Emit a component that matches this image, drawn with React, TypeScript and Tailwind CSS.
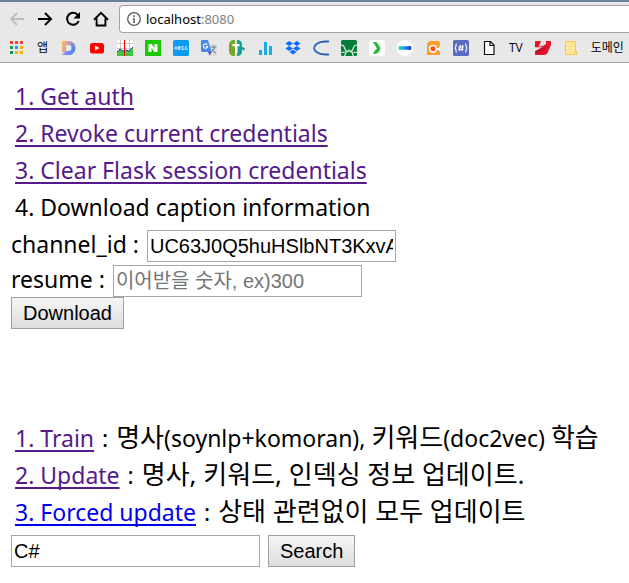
import type { ReactNode } from "react";

const pageFont = "font-['Noto_Sans','Noto_Sans_CJK_KR',sans-serif]";
const controlFont = "font-['Liberation_Sans','Noto_Sans_CJK_KR',sans-serif]";

function Icon({ children }: { children: ReactNode }) {
  return (
    <svg viewBox="0 0 16 16" className="size-4 shrink-0" aria-hidden="true">
      {children}
    </svg>
  );
}

function NavButton({ label, children }: { label: string; children: ReactNode }) {
  return (
    <button type="button" aria-label={label} className="size-4 shrink-0">
      <Icon>{children}</Icon>
    </button>
  );
}

function Bookmark({ label, children }: { label: string; children: ReactNode }) {
  return (
    <a href="#" aria-label={label} className="shrink-0">
      {children}
    </a>
  );
}

function Toolbar() {
  return (
    <div className="flex h-7 items-center gap-3 pl-[9px]">
      <NavButton label="Back">
        <path d="M15 8H2.500M8 2L2 8l6 6" fill="none" stroke="#bdbdbd" strokeWidth="1.800" />
      </NavButton>
      <NavButton label="Forward">
        <path d="M1 8h12.500M8 2l6 6-6 6" fill="none" stroke="#000" strokeWidth="2" />
      </NavButton>
      <NavButton label="Reload">
        <path d="M12.900 4.200A6 6 0 1 0 13.700 10" fill="none" stroke="#000" strokeWidth="2" />
        <path d="M15 1v6.500H8.500z" />
      </NavButton>
      <NavButton label="Home">
        <path d="M1 8.700L8 1.800l7 6.900M3.600 7.500v7h8.800v-7" fill="none" stroke="#000" strokeWidth="1.900" />
      </NavButton>
      <div className="-ml-0.5 flex h-7 grow items-center rounded-l-sm border border-r-0 border-[#a3a3a3] bg-white pl-1.5">
        <svg viewBox="0 0 16 16" className="size-4 shrink-0" aria-hidden="true">
          <circle cx="8" cy="8" r="6.300" fill="none" stroke="#5a5a5a" strokeWidth="1.300" />
          <path d="M7.200 4.300h1.600v1.600H7.200zM7.200 7h1.600v5H7.200z" fill="#5a5a5a" />
        </svg>
        <div className="pl-1 font-['Noto_Sans',sans-serif] text-[13px] leading-5">
          localhost<span className="text-[#808080]">:8080</span>
        </div>
      </div>
    </div>
  );
}

const appDots = ["#f44336", "#f44336", "#f44336", "#0f9d58", "#2196f3", "#ffb300", "#0f9d58", "#ffb300", "#ffb300"];

function Bookmarks() {
  return (
    <nav className="flex h-[29px] items-center gap-3 overflow-hidden pl-[9px] font-['Open_Sans','Noto_Sans_CJK_KR',sans-serif] text-xs leading-4 whitespace-nowrap">
      <Bookmark label="Apps">
        <Icon>
          {appDots.map((color, i) => (
            <rect key={i} x={1 + (i % 3) * 5} y={1 + Math.floor(i / 3) * 5} width="3" height="3" fill={color} />
          ))}
        </Icon>
      </Bookmark>
      <a href="#" className="w-3 shrink-0">앱</a>
      <Bookmark label="Daum">
        <Icon>
          <defs>
            <linearGradient id="dfill" x1="0" y1="0" x2="1" y2="0.3">
              <stop offset="0" stopColor="#ffc44d" />
              <stop offset="0.5" stopColor="#c99aa8" />
              <stop offset="1" stopColor="#4285f4" />
            </linearGradient>
            <linearGradient id="dbase" x1="0" y1="0" x2="1" y2="0">
              <stop offset="0" stopColor="#b388ee" />
              <stop offset="1" stopColor="#448aff" />
            </linearGradient>
          </defs>
          <path d="M1 1h6.500a7 7 0 0 1 0 14H1l4-4h2.500a3 3 0 0 0 0-6H5v6l-4 2z" fill="url(#dfill)" />
          <path d="M1 15l4-4h3l4 2.500Q10 15 7.500 15z" fill="url(#dbase)" />
        </Icon>
      </Bookmark>
      <Bookmark label="YouTube">
        <Icon>
          <rect x="1" y="3" width="14" height="10.500" rx="2.500" fill="#f00" />
          <path d="M6 5.500v5L10.500 8z" fill="#fff" />
        </Icon>
      </Bookmark>
      <Bookmark label="Chart">
        <Icon>
          <path d="M0 0h16v16H0z" fill="#fff" />
          <path d="M0 3.500h16M0 8.500h16M3.500 0v16M12.500 0v16" stroke="#c8c8c8" />
          <path d="M0 12l3-3 3 2 3-1 3 1 4-4v9H0z" fill="#3fc53f" />
          <path d="M0 12l3-3 3 2 3-1 3 1 4-4" fill="none" stroke="#2541b8" />
          <path d="M7 0h1v16H7z" fill="red" />
        </Icon>
      </Bookmark>
      <Bookmark label="Naver">
        <Icon>
          <path d="M0 0h16v16H0z" fill="#1ec800" />
          <path d="M3.500 4h3L9.500 8V4h3v8h-3l-3-4v4h-3z" fill="#fff" />
        </Icon>
      </Bookmark>
      <Bookmark label="ORGG">
        <Icon>
          <rect width="16" height="16" rx="1.500" fill="#0d9bef" />
          <g fill="none" stroke="#d8f0ff" strokeWidth="0.900">
            <circle cx="3" cy="8" r="1.300" />
            <path d="M5.500 10V6.500h1.700v1.500H6l1.500 2M11 6.700H9v2.800h2V8.500M14.500 6.700h-2v2.800h2V8.500" />
          </g>
        </Icon>
      </Bookmark>
      <Bookmark label="Translate">
        <Icon>
          <path d="M7 4h9v12H9z" fill="#dcdcdc" />
          <path d="M9.500 7h6M12.500 5.500V7M14 7q-1 4-4 5M11 9q1 3 4 4" stroke="#6f7f8c" fill="none" />
          <path d="M1 0h6l3.500 12H1a1 1 0 0 1-1-1V1a1 1 0 0 1 1-1" fill="#4a86e8" />
          <path d="M7 12h3.500L8.500 15.500z" fill="#3f51b5" />
          <path d="M6.300 4.700a2.200 2.200 0 1 0 .4 1.800H4.700" stroke="#fff" strokeWidth="1.100" fill="none" />
        </Icon>
      </Bookmark>
      <Bookmark label="Encyclopedia">
        <Icon>
          <path d="M3.500 0H6v16H3.500Q0 15 0 11V5Q0 1 3.500 0" fill="#7da52e" />
          <path d="M6 0h2v16H6z" fill="#dfe9d2" />
          <path d="M8 0q5 0 5 5v6q0 5-5 5z" fill="#12a193" />
          <path d="M13 7l3 1-1 3-2-2z" fill="#12a193" />
          <path d="M3.500 4h7v2.200H8.500V13H6V6.200H3.500z" fill="#fff" />
        </Icon>
      </Bookmark>
      <Bookmark label="Statistics">
        <Icon>
          <path d="M2 10h3v5H2zM7 2h3v13H7zM12 6h3v9h-3z" fill="#16addf" />
        </Icon>
      </Bookmark>
      <Bookmark label="Dropbox">
        <Icon>
          <path d="M4.200 1L8 3.500 4.200 6 .4 3.500zM11.800 1l3.800 2.500L11.800 6 8 3.500zM4.200 6L8 8.500 4.200 11 .4 8.500zM11.800 6l3.800 2.500-3.800 2.500L8 8.500zM8 9.700l3.600 2.300L8 14.500 4.400 12z" fill="#0a6cff" />
        </Icon>
      </Bookmark>
      <Bookmark label="C">
        <Icon>
          <path d="M16 1.500H12C-2.500 2-2.500 14 12 14.500H16" fill="none" stroke="#2b5fb4" strokeWidth="1.800" />
        </Icon>
      </Bookmark>
      <Bookmark label="Wiki">
        <Icon>
          <rect width="16" height="16" rx="1.500" fill="#087c3b" />
          <path d="M0 5q3 0 4 4l2 3 2-2 2 2 2-3q1-4 4-4M0 12.500l5-.5M16 12.500l-5-.5M5 12.500L3.500 16M11 12.500l1.500 3.500" fill="none" stroke="#e2f3e8" strokeWidth="1.200" />
        </Icon>
      </Bookmark>
      <Bookmark label="Arrow">
        <Icon>
          <rect width="16" height="16" rx="3" fill="#fff" />
          <path d="M4 2h3.500l4 6q-1 6-7 6 0-3 3.500-5.500z" fill="#26b83b" />
        </Icon>
      </Bookmark>
      <Bookmark label="Dots">
        <Icon>
          <circle cx="8" cy="8" r="8" fill="#fff" />
          <circle cx="3.300" cy="8" r="2" fill="#18d5a4" />
          <circle cx="6.500" cy="8" r="2" fill="#15a9e8" />
          <circle cx="9.500" cy="8" r="2" fill="#247ce8" />
          <circle cx="12.500" cy="8" r="2.200" fill="#2459d8" />
        </Icon>
      </Bookmark>
      <Bookmark label="Search">
        <Icon>
          <path d="M2 3l3-2h9l1 2v3l-1 1 1 2v6H2z" fill="#ff9d2e" />
          <circle cx="8" cy="8.800" r="3.300" fill="#f4511e" stroke="#fff" strokeWidth="1.600" />
          <path d="M11 9l4-2v4z" fill="#fff" />
        </Icon>
      </Bookmark>
      <Bookmark label="Hash">
        <Icon>
          <rect width="16" height="16" rx="1.500" fill="#5c6bc0" />
          <path d="M4 4Q2.500 4 3 6.500L2 8l1 1.500Q2.500 12 4 12M12 4q1.500 0 1 2.500L14 8l-1 1.500q.5 2.500-1 2.500M7.300 5L6.500 11M9.800 5L9 11M5.500 7h5.300M5.200 9.300h5.300" fill="none" stroke="#fff" strokeWidth="1.100" />
        </Icon>
      </Bookmark>
      <a href="#" className="flex shrink-0 items-center gap-3">
        <Icon>
          <path d="M3.500 1.500h6l3.500 3.500v9.500H3.500zM9 2v3.500h4" fill="#fff" stroke="#111" strokeWidth="1.200" />
        </Icon>
        TV
      </a>
      <Bookmark label="News">
        <Icon>
          <path d="M0 1h6L4 6h4l3-2 0-3h5v4l-4 9-3 1H0v-4l8-4-8 1z" fill="#e2182d" />
          <path d="M1 11l10-5-3 5-7 3z" fill="#c60f29" />
          <path d="M0 7.500h3L8 4.500l2-3" fill="none" stroke="#f6c5cb" strokeWidth="0.800" />
        </Icon>
      </Bookmark>
      <a href="#" className="flex shrink-0 items-center gap-3">
        <Icon>
          <path d="M2.500 1.500h10v10h1v3h-11z" fill="#ffe596" stroke="#f0cb55" />
          <path d="M11.500 14.500v-2.500h1.500" fill="none" stroke="#f0cb55" />
        </Icon>
        도메인
      </a>
    </nav>
  );
}

function Hangul({ children }: { children: ReactNode }) {
  return <span className="text-[26px] leading-none">{children}</span>;
}

const authLinks = ["1. Get auth", "2. Revoke current credentials", "3. Clear Flask session credentials"];

const updateLinks = [
  {
    text: "1. Train",
    note: (
      <>
        <Hangul>명사</Hangul>(soynlp+komoran), <Hangul>키워드</Hangul>(doc2vec) <Hangul>학습</Hangul>
      </>
    ),
    color: "text-[#551a8b]",
  },
  { text: "2. Update", note: <Hangul>명사, 키워드, 인덱싱 정보 업데이트.</Hangul>, color: "text-[#551a8b]" },
  { text: "3. Forced update", note: <Hangul>상태 관련없이 모두 업데이트</Hangul>, color: "text-[#0000ee]" },
];

const underline = "underline decoration-2 underline-offset-3 [text-decoration-skip-ink:none]";
const field = `${controlFont} h-8 w-[249px] border border-[#a6a6a6] bg-white px-0.5 text-xl leading-7 placeholder:text-[#757575]`;
const button = `${controlFont} h-8 border border-[#a0a0a0] bg-linear-to-b from-[#f6f6f6] to-[#dddddd] px-[11px] text-xl leading-7`;

export default function App() {
  return (
    <div className="min-h-screen bg-white text-black">
      <header className="border-t-2 border-b border-t-[#6d7f9f] border-b-[#a3a3a3] bg-[#e8e8e8] pt-[3px]">
        <Toolbar />
        <Bookmarks />
      </header>
      <main className={`${pageFont} px-[11px] pt-[15px] text-[23px] leading-[37px] whitespace-nowrap`}>
        <ul className="pl-1">
          {authLinks.map((text) => (
            <li key={text}>
              <a href="#" className={`${underline} text-[#551a8b]`}>{text}</a>
            </li>
          ))}
          <li>4. Download caption information</li>
        </ul>
        <form onSubmit={(e) => e.preventDefault()}>
          <div className="flex h-9 items-end gap-2">
            <label htmlFor="channel" className="leading-9">channel_id :</label>
            <input id="channel" className={field} defaultValue="UC63J0Q5huHSlbNT3KxvAaQQ" />
          </div>
          <div className="flex h-[35px] items-end gap-2">
            <label htmlFor="resume" className="leading-9">resume :</label>
            <input id="resume" className={field} placeholder="이어받을 숫자, ex)300" />
          </div>
          <button type="submit" className={`${button} block`}>Download</button>
        </form>
        <ul className="pt-[91px] pl-1">
          {updateLinks.map(({ text, note, color }) => (
            <li key={text} className="flex h-[37px] items-baseline gap-2">
              <a href="#" className={`${underline} ${color}`}>{text}</a>
              <span>:</span>
              <span>{note}</span>
            </li>
          ))}
        </ul>
        <form className="flex items-center gap-2 pt-1" onSubmit={(e) => e.preventDefault()}>
          <input aria-label="Search" className={field} defaultValue="C#" />
          <button type="submit" className={button}>Search</button>
        </form>
      </main>
    </div>
  );
}
